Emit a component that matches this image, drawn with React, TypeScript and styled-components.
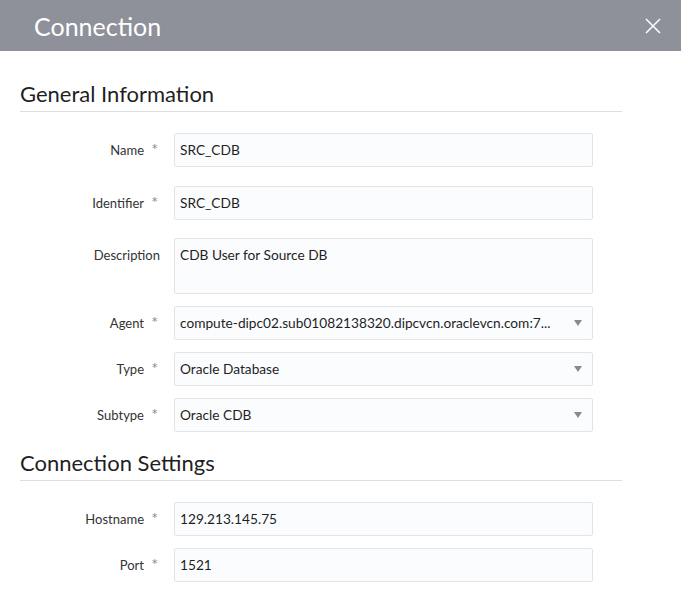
import React from "react";
import styled, { createGlobalStyle } from "styled-components";

const Global = createGlobalStyle`
  html, body { margin: 0; padding: 0; background: #ffffff; }
  body { font-family: Lato, "Open Sans", sans-serif; }
  * { box-sizing: border-box; }
`;

const Page = styled.div`
  width: 681px;
  height: 589px;
  overflow: hidden;
  background: #fff;
  display: flex;
  flex-direction: column;
`;

const Header = styled.div`
  height: 51px;
  background: #8e9199;
  display: flex;
  align-items: center;
  justify-content: space-between;
  padding: 0 19px 0 34px;
  flex-shrink: 0;
`;

const Title = styled.h1`
  margin: 0;
  font-family: Lato, sans-serif;
  font-weight: 400;
  font-size: 25px;
  color: #ffffff;
`;

const Close = styled.button`
  border: 0;
  background: none;
  padding: 0;
  width: 18px;
  height: 18px;
  display: flex;
  align-items: center;
  justify-content: center;
  cursor: pointer;
`;

const Body = styled.div`
  padding: 30px 0 0 20px;
  width: 622px;
  display: flex;
  flex-direction: column;
`;

const SectionTitle = styled.h2<{ $top?: number }>`
  margin: ${(p) => p.$top ?? 0}px 0 0 0;
  padding: 0 0 4px 0;
  font-family: Lato, sans-serif;
  font-weight: 400;
  font-size: 22px;
  line-height: 26px;
  color: #1f1f1f;
  border-bottom: 1px solid #dedede;
`;

const Fields = styled.div<{ $top: number }>`
  margin-top: ${(p) => p.$top}px;
  display: flex;
  flex-direction: column;
`;

const Row = styled.div<{ $gap: number }>`
  display: grid;
  grid-template-columns: 154px 419px;
  align-items: start;
  margin-top: ${(p) => p.$gap}px;
  &:first-child { margin-top: 0; }
`;

const Label = styled.label`
  display: flex;
  justify-content: flex-end;
  align-items: flex-start;
  padding-top: 9px;
  padding-right: 14px;
  font-size: 13px;
  line-height: 16px;
  color: #333;
`;

const Req = styled.span`
  display: inline-block;
  width: 16px;
  padding-right: 2px;
  text-align: right;
  color: #8c8c8c;
  font-size: 16px;
  line-height: 14px;
`;

const Box = styled.div<{ $h: number }>`
  height: ${(p) => p.$h}px;
  border: 1px solid #e2e4e8;
  border-radius: 2px;
  background: #fbfcfe;
  display: flex;
  align-items: ${(p) => (p.$h > 40 ? "flex-start" : "center")};
  padding: ${(p) => (p.$h > 40 ? "8px 5px" : "0 5px")};
  font-size: 13.7px;
  line-height: 16px;
  color: #1f1f1f;
`;

const Value = styled.span`
  flex: 1;
  white-space: nowrap;
`;

const Arrow = styled.span`
  width: 0;
  height: 0;
  border-left: 4px solid transparent;
  border-right: 4px solid transparent;
  border-top: 6px solid #888a8f;
  margin: 0 5px 0 8px;
  flex-shrink: 0;
`;

type F = { label: string; value: string; req?: boolean; select?: boolean; h?: number; gap: number };

const general: F[] = [
  { label: "Name", value: "SRC_CDB", req: true, gap: 0 },
  { label: "Identifier", value: "SRC_CDB", req: true, gap: 19 },
  { label: "Description", value: "CDB User for Source DB", h: 56, gap: 18 },
  {
    label: "Agent",
    value: "compute-dipc02.sub01082138320.dipcvcn.oraclevcn.com:7...",
    req: true,
    select: true,
    gap: 12,
  },
  { label: "Type", value: "Oracle Database", req: true, select: true, gap: 12 },
  { label: "Subtype", value: "Oracle CDB", req: true, select: true, gap: 12 },
];

const settings: F[] = [
  { label: "Hostname", value: "129.213.145.75", req: true, gap: 0 },
  { label: "Port", value: "1521", req: true, gap: 12 },
];

const Field = ({ f }: { f: F }) => (
  <Row $gap={f.gap}>
    <Label>
      {f.label}
      {f.req && <Req>*</Req>}
    </Label>
    <Box $h={f.h ?? 34}>
      <Value>{f.value}</Value>
      {f.select && <Arrow />}
    </Box>
  </Row>
);

export default function App() {
  return (
    <Page>
      <Global />
      <Header>
        <Title>Connection</Title>
        <Close aria-label="Close">
          <svg width="16" height="16" viewBox="0 0 16 16">
            <path d="M1 1 L15 15 M15 1 L1 15" stroke="#ffffff" strokeWidth="1.5" fill="none" />
          </svg>
        </Close>
      </Header>
      <Body>
        <SectionTitle>General Information</SectionTitle>
        <Fields $top={21}>
          {general.map((f) => (
            <Field key={f.label} f={f} />
          ))}
        </Fields>
        <SectionTitle $top={18}>Connection Settings</SectionTitle>
        <Fields $top={21}>
          {settings.map((f) => (
            <Field key={f.label} f={f} />
          ))}
        </Fields>
      </Body>
    </Page>
  );
}
